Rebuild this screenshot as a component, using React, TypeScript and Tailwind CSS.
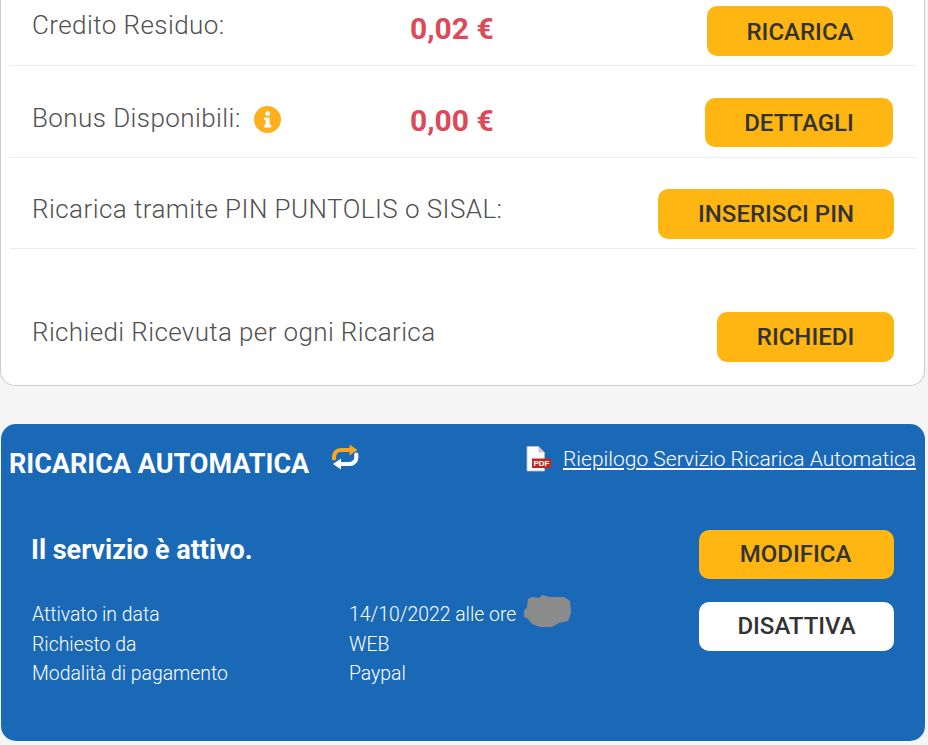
import React from "react";

const font = { fontFamily: "Roboto, sans-serif" };

const YellowButton = ({ label, className = "" }: { label: string; className?: string }) => (
  <button className={`rounded-[10px] bg-[#ffb612] text-[24px] font-medium leading-none text-[#333] ${className}`}>
    {label}
  </button>
);

const InfoIcon = () => (
  <svg width="27" height="27" viewBox="0 0 27 27" className="ml-[13.5px] mt-[3px] shrink-0">
    <circle cx="13.5" cy="13.5" r="13.5" fill="#fdb01b" />
    <circle cx="13.7" cy="7.6" r="2.4" fill="#fff" />
    <path d="M10 11.4h5.6v7.4h1.7v2.6H10v-2.6h1.7v-4.8H10z" fill="#fff" />
  </svg>
);

const RepeatIcon = () => (
  <svg width="28" height="26" viewBox="0 0 28 26" fill="none" className="-mt-[1px] shrink-0">
    <path d="M3 14.5V12.5a6.5 6.5 0 0 1 6.5-6.5H20" stroke="#f5a623" strokeWidth="4.2" strokeLinecap="round" />
    <path d="M18.5 0.5L26.5 6l-8 5.5z" fill="#f5a623" />
    <path d="M25.3 10.5v3a6.5 6.5 0 0 1-6.5 6.5H9" stroke="#fff" strokeWidth="4.2" strokeLinecap="round" />
    <path d="M10 14.5L2 20l8 5.5z" fill="#fff" />
  </svg>
);

const PdfIcon = () => (
  <svg width="27" height="26" viewBox="0 0 27 26" className="mt-[1px] shrink-0">
    <path d="M1 0.5h11.5l6 6v18.5H1z" fill="#fff" stroke="#bbb" strokeWidth="0.8" />
    <path d="M12.5 0.5v6h6z" fill="#c9c9c9" />
    <rect x="6" y="12.5" width="19" height="9.5" fill="#c0291f" />
    <text x="15.5" y="20" textAnchor="middle" fontSize="8" fontWeight="700" fill="#fff" fontFamily="Liberation Sans, sans-serif">
      PDF
    </text>
  </svg>
);

const Blob = () => (
  <svg width="48" height="36" viewBox="0 0 48 36" className="absolute left-[174px] top-[-6px]">
    <path
      d="M9 3l7 1 3-3 8 2 14 0 6 4 1 12-3 8-9 2-7 4-12 0-8-3-5-6-3-1 0-6 3-4 1-8 z"
      fill="#8b8b8b"
    />
  </svg>
);

const rowClass = "mx-2 flex border-b border-[#ececec]";
const labelClass = "text-[26px] font-light leading-[30px] text-[#505050]";
const valueClass = "mt-[5px] text-[30px] font-bold leading-[36px] text-[#dc4a5a]";

export default function App() {
  return (
    <div className="h-[745px] overflow-hidden bg-[#f5f5f5]" style={font}>
      <div className="mr-[3px] rounded-b-[15px] border border-t-0 border-[#ccc] bg-white pb-[23px]">
        <div className={`${rowClass} h-[66px] pl-[23px] pr-[23px] pt-[6px]`}>
          <div className={`${labelClass} mt-[4px] w-[378px] tracking-[0.42px]`}>Credito Residuo:</div>
          <div className={valueClass}>0,02 €</div>
          <YellowButton label="RICARICA" className="ml-auto h-[50px] w-[186px] pt-[2px]" />
        </div>
        <div className={`${rowClass} h-[92px] pl-[23px] pr-[23px] pt-[32px]`}>
          <div className={`${labelClass} mt-[5px] flex w-[378px] tracking-[0.42px]`}>
            Bonus Disponibili:
            <InfoIcon />
          </div>
          <div className={valueClass}>0,00 €</div>
          <YellowButton label="DETTAGLI" className="ml-auto h-[49px] w-[188px]" />
        </div>
        <div className={`${rowClass} h-[91px] pl-[23px] pr-[22px] pt-[31px]`}>
          <div className={`${labelClass} mt-[5px] tracking-[0.44px]`}>Ricarica tramite PIN PUNTOLIS o SISAL:</div>
          <YellowButton label="INSERISCI PIN" className="ml-auto h-[50px] w-[236px]" />
        </div>
        <div className="mx-2 mt-[63px] flex pl-[23px] pr-[22px]">
          <div className={`${labelClass} mt-[5px] tracking-[0.37px]`}>Richiedi Ricevuta per ogni Ricarica</div>
          <YellowButton label="RICHIEDI" className="ml-auto h-[50px] w-[177px]" />
        </div>
      </div>

      <div className="ml-[1px] mr-[3px] mt-[38px] h-[317px] rounded-[15px] bg-[#1a69b7] text-white">
        <div className="flex items-start pl-[8px] pr-[9px] pt-[21px]">
          <div className="mt-[1px] text-[27px] font-bold leading-[36px]">RICARICA AUTOMATICA</div>
          <div className="ml-[22px]">
            <RepeatIcon />
          </div>
          <a href="#" className="ml-auto flex items-start">
            <PdfIcon />
            <span className="ml-[10px] mt-[1px] text-[21px] font-light leading-[26px] underline">
              Riepilogo Servizio Ricarica Automatica
            </span>
          </a>
        </div>
        <div className="mt-[48px] flex pl-[31px] pr-[31px]">
          <div className="flex-1">
            <div className="-ml-[1px] mt-[4px] text-[27px] font-bold leading-[32px]">Il servizio è attivo.</div>
            <div className="mt-[34px] grid grid-cols-[318px_1fr] text-[19.4px] font-light leading-[29.5px]">
              <div>Attivato in data</div>
              <div className="relative -ml-[1px]">
                14/10/2022 alle ore
                <Blob />
              </div>
              <div>Richiesto da</div>
              <div className="-ml-[1px]">WEB</div>
              <div>Modalità di pagamento</div>
              <div className="-ml-[1px]">Paypal</div>
            </div>
          </div>
          <div className="flex w-[195px] flex-col gap-[23px]">
            <YellowButton label="MODIFICA" className="h-[49px] w-full pb-[2px] pr-[2px]" />
            <button className="h-[49px] w-full rounded-[10px] bg-white pb-[2px] text-[24px] font-medium leading-none text-[#333]">
              DISATTIVA
            </button>
          </div>
        </div>
      </div>
    </div>
  );
}
